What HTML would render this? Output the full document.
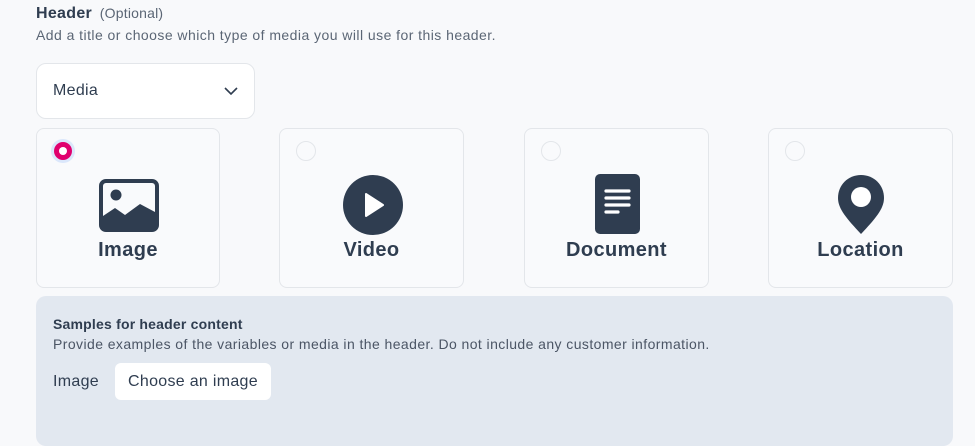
<!DOCTYPE html><html><head><style>
body{margin:0;width:975px;height:432px;overflow:hidden;background:#f8f9fb;font-family:"Liberation Sans",sans-serif;color:#2f3d50;position:relative}
.a{position:absolute}
.card{position:absolute;top:128px;width:184px;height:160px;border:1px solid #e3e6ea;border-radius:8px;background:#f9fafc;box-sizing:border-box}
.card .lbl{position:absolute;left:0;right:0;top:110px;text-align:center;font-weight:bold;font-size:20px;letter-spacing:.4px;color:#2f3d50}
.rad{position:absolute;left:16px;top:12px;width:20px;height:20px;border:1px solid #e3e6ea;border-radius:50%;box-sizing:border-box}
</style></head><body>
<div class="a" style="left:36px;top:5px;font-size:16px;font-weight:bold;letter-spacing:.3px">Header <span style="font-weight:normal;font-size:14px;color:#5b6675;margin-left:3px;letter-spacing:.2px">(Optional)</span></div>
<div class="a" style="left:36px;top:27px;font-size:14px;color:#5b6675;letter-spacing:.45px">Add a title or choose which type of media you will use for this header.</div>
<div class="a" style="left:36px;top:63px;width:219px;height:56px;box-sizing:border-box;background:#fff;border:1px solid #e3e6ea;border-radius:10px">
<div class="a" style="left:16px;top:18px;font-size:16px;letter-spacing:.3px">Media</div>
<svg class="a" style="left:186px;top:21px" width="16" height="12" viewBox="0 0 16 12"><path d="M2 3l6 6 6-6" fill="none" stroke="#2f3d50" stroke-width="1.6"/></svg></div>

<div class="card" style="left:36px"><div class="a" style="left:14px;top:10px;width:24px;height:24px;border-radius:50%;background:#dbe7fb"></div><div class="a" style="left:17px;top:13px;width:18px;height:18px;border-radius:50%;background:#e0006e"></div><div class="a" style="left:22px;top:18px;width:8px;height:8px;border-radius:50%;background:#fff"></div>
<svg class="a" style="left:62px;top:50px" width="60" height="53" viewBox="0 0 60 53"><rect x="2" y="2" width="56" height="49" rx="5" fill="none" stroke="#2f3d50" stroke-width="4"/><circle cx="17" cy="16" r="5.5" fill="#2f3d50"/><path d="M4 37l12-8 10 7 15-11 15 8v18H4z" fill="#2f3d50"/></svg>
<div class="lbl">Image</div></div>

<div class="card" style="left:279px;width:185px"><div class="rad"></div>
<svg class="a" style="left:62px;top:45px" width="62" height="62" viewBox="0 0 62 62"><circle cx="31" cy="31" r="30" fill="#2f3d50"/><path d="M24 20v22l17-11z" fill="#fff" stroke="#fff" stroke-width="2" stroke-linejoin="round"/></svg>
<div class="lbl">Video</div></div>

<div class="card" style="left:524px;width:185px"><div class="rad"></div>
<svg class="a" style="left:70px;top:45px" width="46" height="61" viewBox="0 0 46 61"><rect x="0" y="0" width="45" height="60" rx="5" fill="#2f3d50"/><g stroke="#fff" stroke-width="3.2" stroke-linecap="round"><path d="M11 17h23M11 24h23M11 31h23M11 38h12"/></g></svg>
<div class="lbl">Document</div></div>

<div class="card" style="left:768px;width:185px"><div class="rad"></div>
<svg class="a" style="left:68px;top:45px" width="48" height="62" viewBox="0 0 48 62"><path d="M24 1C11 1 1 11 1 24c0 11 9 21 23 36C38 45 47 35 47 24 47 11 37 1 24 1z" fill="#2f3d50"/><circle cx="24" cy="23" r="10" fill="#fff"/></svg>
<div class="lbl">Location</div></div>

<div class="a" style="left:36px;top:296px;width:917px;height:150px;background:#e2e8f0;border-radius:10px">
<div class="a" style="left:17px;top:20px;font-size:14px;font-weight:bold;letter-spacing:.2px">Samples for header content</div>
<div class="a" style="left:17px;top:40px;font-size:14px;color:#4b5565;letter-spacing:.42px">Provide examples of the variables or media in the header. Do not include any customer information.</div>
<div class="a" style="left:17px;top:77px;font-size:16px;letter-spacing:.3px">Image</div>
<div class="a" style="left:79px;top:67px;width:156px;height:37px;background:#fff;border-radius:6px;font-size:16px;line-height:37px;text-align:center;letter-spacing:.3px">Choose an image</div>
</div>
</body></html>
